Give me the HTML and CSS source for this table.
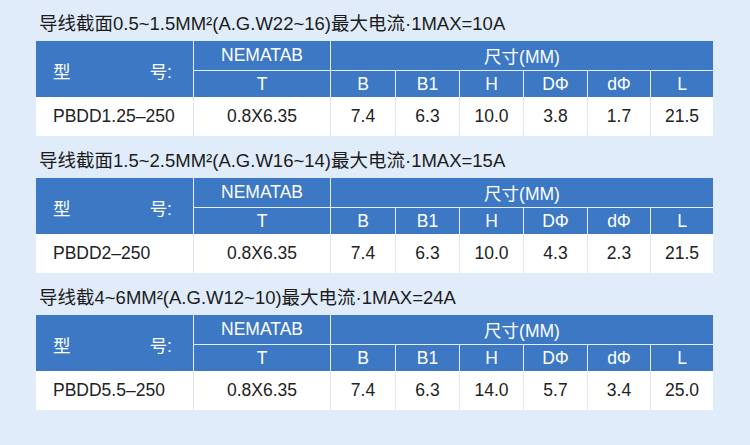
FILE: index.html
```html
<!DOCTYPE html>
<html lang="zh-CN">
<head>
<meta charset="utf-8">
<title>导线截面规格</title>
<link rel="stylesheet" href="styles.css">
</head>
<body>
<main class="page">
  <section class="spec">
    <h2 class="spec-title">导线截面0.5~1.5MM²(A.G.W22~16)最大电流·1MAX=10A</h2>
    <div class="grid">
      <div class="hd model"><span>型</span><span>号:</span></div>
      <div class="hd nema">NEMATAB</div>
      <div class="hd dims">尺寸(MM)</div>
      <div class="hd sub">T</div>
      <div class="hd sub">B</div>
      <div class="hd sub">B1</div>
      <div class="hd sub">H</div>
      <div class="hd sub">DΦ</div>
      <div class="hd sub">dΦ</div>
      <div class="hd sub last">L</div>
      <div class="td name">PBDD1.25–250</div>
      <div class="td">0.8X6.35</div>
      <div class="td">7.4</div>
      <div class="td">6.3</div>
      <div class="td">10.0</div>
      <div class="td">3.8</div>
      <div class="td">1.7</div>
      <div class="td last">21.5</div>
    </div>
  </section>
  <section class="spec">
    <h2 class="spec-title">导线截面1.5~2.5MM²(A.G.W16~14)最大电流·1MAX=15A</h2>
    <div class="grid">
      <div class="hd model"><span>型</span><span>号:</span></div>
      <div class="hd nema">NEMATAB</div>
      <div class="hd dims">尺寸(MM)</div>
      <div class="hd sub">T</div>
      <div class="hd sub">B</div>
      <div class="hd sub">B1</div>
      <div class="hd sub">H</div>
      <div class="hd sub">DΦ</div>
      <div class="hd sub">dΦ</div>
      <div class="hd sub last">L</div>
      <div class="td name">PBDD2–250</div>
      <div class="td">0.8X6.35</div>
      <div class="td">7.4</div>
      <div class="td">6.3</div>
      <div class="td">10.0</div>
      <div class="td">4.3</div>
      <div class="td">2.3</div>
      <div class="td last">21.5</div>
    </div>
  </section>
  <section class="spec">
    <h2 class="spec-title">导线截4~6MM²(A.G.W12~10)最大电流·1MAX=24A</h2>
    <div class="grid">
      <div class="hd model"><span>型</span><span>号:</span></div>
      <div class="hd nema">NEMATAB</div>
      <div class="hd dims">尺寸(MM)</div>
      <div class="hd sub">T</div>
      <div class="hd sub">B</div>
      <div class="hd sub">B1</div>
      <div class="hd sub">H</div>
      <div class="hd sub">DΦ</div>
      <div class="hd sub">dΦ</div>
      <div class="hd sub last">L</div>
      <div class="td name">PBDD5.5–250</div>
      <div class="td">0.8X6.35</div>
      <div class="td">7.4</div>
      <div class="td">6.3</div>
      <div class="td">14.0</div>
      <div class="td">5.7</div>
      <div class="td">3.4</div>
      <div class="td last">25.0</div>
    </div>
  </section>
</main>
</body>
</html>
```
FILE: styles.css
```css
html, body {
  margin: 0;
  padding: 0;
  background: #e0ecfa;
}

body {
  font-family: "Liberation Sans", "Noto Sans CJK SC", sans-serif;
  color: #2a2a2a;
}

.page {
  padding: 11px 0 0 36px;
  width: 677px;
}

.spec {
  margin-bottom: 12px;
}

.spec-title {
  margin: 0 0 4px;
  padding-left: 3px;
  font-size: 18.5px;
  line-height: 26px;
  font-weight: normal;
  color: #1c1c1c;
  white-space: nowrap;
}

.grid {
  display: grid;
  grid-template-columns: 158px 137px 65px 64px 64px 64px 63px 62px;
  grid-template-rows: 30px 26px 39px;
}

.hd {
  background: #3c78c4;
  color: #fff;
  font-size: 17.5px;
  display: flex;
  align-items: center;
  justify-content: center;
  box-sizing: border-box;
  border-right: 1px solid #e4edf9;
}

.model {
  grid-row: 1 / 3;
  grid-column: 1;
  justify-content: space-between;
  padding: 2px 21px 0 17px;
}

.nema {
  grid-row: 1;
  grid-column: 2;
  border-bottom: 1px solid #e4edf9;
}

.dims {
  grid-row: 1;
  grid-column: 3 / 9;
  border-right: none;
  border-bottom: 1px solid #e4edf9;
}

.sub {
  padding-top: 1px;
}

.hd.last {
  border-right: none;
}

.td {
  background: #fff;
  font-size: 17.5px;
  color: #222;
  display: flex;
  align-items: center;
  justify-content: center;
  box-sizing: border-box;
  border-right: 1px solid #dde7f3;
}

.td.name {
  justify-content: flex-start;
  padding-left: 17px;
}

.td.last {
  border-right: none;
}
```
